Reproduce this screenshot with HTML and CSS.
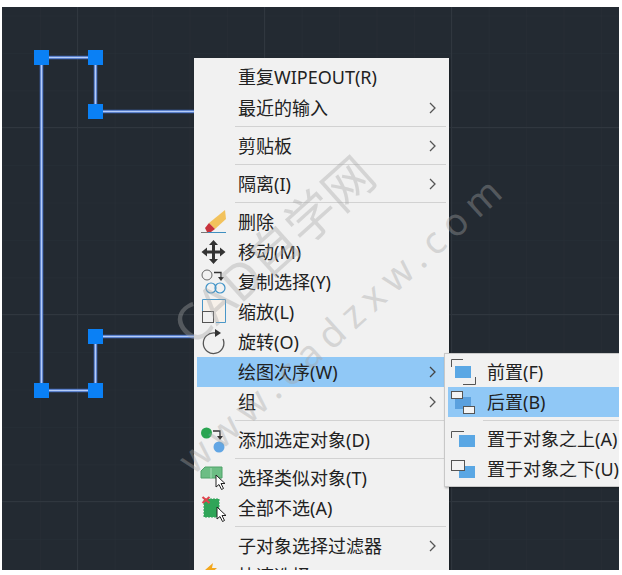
FILE: index.html
```html
<!DOCTYPE html>
<html lang="zh-CN">
<head>
<meta charset="utf-8">
<title>绘图次序</title>
<link rel="stylesheet" href="styles.css">
</head>
<body>
<div class="page">
  <div class="canvas">
    <svg class="drawing" width="617" height="563" viewBox="2 7 617 563" xmlns="http://www.w3.org/2000/svg">
      <defs>
        <pattern id="minor" x="2.5" y="15.5" width="37.4" height="37.4" patternUnits="userSpaceOnUse">
          <path d="M0 0V37.4M0 0H37.4" stroke="#282f37" stroke-width="1" fill="none"/>
        </pattern>
      </defs>
      <rect x="2" y="7" width="617" height="563" fill="#232a32"/>
      <rect x="2" y="7" width="617" height="563" fill="url(#minor)"/>
      <path d="M77.5 7V570M264.5 7V570M451.5 7V570M2 127.5H619M2 314.5H619M2 501.5H619" stroke="#30373f" fill="none"/>
      <path d="M194 111.5H95.5V57.5H41.5V390.5H95.5V336.5H194" stroke="#3f68bc" stroke-width="3.6" fill="none"/>
      <path d="M194 111.5H95.5V57.5H41.5V390.5H95.5V336.5H194" stroke="#b4ccf8" stroke-width="1.6" fill="none"/>
      <g fill="#0a80f5">
        <rect x="34" y="50" width="15" height="15"/>
        <rect x="88" y="50" width="15" height="15"/>
        <rect x="88" y="104" width="15" height="15"/>
        <rect x="88" y="329" width="15" height="15"/>
        <rect x="34" y="383" width="15" height="15"/>
        <rect x="88" y="383" width="15" height="15"/>
      </g>
    </svg>

    <div class="menu">
      <div class="row first"><span class="slot"></span><span class="label">重复WIPEOUT(R)</span></div>
      <div class="row"><span class="slot"></span><span class="label">最近的输入</span><svg class="chev" width="10" height="14" viewBox="0 0 10 14"><path d="M2 2l5 5-5 5" fill="none" stroke="#555" stroke-width="1.3"/></svg></div>
      <div class="sep"></div>
      <div class="row"><span class="slot"></span><span class="label">剪贴板</span><svg class="chev" width="10" height="14" viewBox="0 0 10 14"><path d="M2 2l5 5-5 5" fill="none" stroke="#555" stroke-width="1.3"/></svg></div>
      <div class="sep"></div>
      <div class="row"><span class="slot"></span><span class="label">隔离(I)</span><svg class="chev" width="10" height="14" viewBox="0 0 10 14"><path d="M2 2l5 5-5 5" fill="none" stroke="#555" stroke-width="1.3"/></svg></div>
      <div class="sep"></div>
      <div class="row"><span class="slot"><svg width="38" height="30" viewBox="0 0 38 30"><path d="M28 3L29 12 18 22 12 16Z" fill="#f2c25c"/><path d="M12 16L18 22 14 25H10L8 21Z" fill="#c8323c"/><path d="M4 25.500H11" stroke="#777"/><path d="M11 25.500H29" stroke="#3f8fc0"/></svg></span><span class="label">删除</span></div>
      <div class="row"><span class="slot"><svg width="38" height="30" viewBox="0 0 38 30"><path d="M16.500 3L21 8H18V13.500H23V10.500L28.500 15 23 19.500V16.500H18V22H21L16.500 27 12 22H15V16.500H10V19.500L4.500 15 10 10.500V13.500H15V8H12Z" fill="#333"/></svg></span><span class="label">移动(M)</span></div>
      <div class="row"><span class="slot"><svg width="38" height="30" viewBox="0 0 38 30"><circle cx="10" cy="8" r="5" fill="none" stroke="#666"/><path d="M17 5.500H24V10" fill="none" stroke="#333" stroke-width="1.300"/><path d="M21 10H27L24 14Z" fill="#333"/><circle cx="14" cy="21" r="5" fill="none" stroke="#3f93c8" stroke-width="1.200"/><circle cx="23" cy="21" r="5" fill="none" stroke="#3f93c8" stroke-width="1.200"/></svg></span><span class="label">复制选择(Y)</span></div>
      <div class="row"><span class="slot"><svg width="38" height="30" viewBox="0 0 38 30"><path d="M5.500 14V2.500H28.500V25.500H19" fill="#f7f1ea" stroke="#4a97c8"/><rect x="5.500" y="14.500" width="11" height="11" fill="#f1f1f1" stroke="#555"/></svg></span><span class="label">缩放(L)</span></div>
      <div class="row"><span class="slot"><svg width="38" height="30" viewBox="0 0 38 30"><path d="M18 6A10.300 10.300 0 1 0 26 12" fill="none" stroke="#555" stroke-width="1.300"/><path d="M18 2L24 6 18 10Z" fill="#333"/></svg></span><span class="label">旋转(O)</span></div>
      <div class="row active"><span class="slot"></span><span class="label">绘图次序(W)</span><svg class="chev" width="10" height="14" viewBox="0 0 10 14"><path d="M2 2l5 5-5 5" fill="none" stroke="#444" stroke-width="1.3"/></svg></div>
      <div class="row"><span class="slot"></span><span class="label">组</span><svg class="chev" width="10" height="14" viewBox="0 0 10 14"><path d="M2 2l5 5-5 5" fill="none" stroke="#555" stroke-width="1.3"/></svg></div>
      <div class="sep"></div>
      <div class="row"><span class="slot"><svg width="38" height="30" viewBox="0 0 38 30"><circle cx="9.500" cy="8" r="5.500" fill="#2aa552"/><path d="M16 6H23V11" fill="none" stroke="#333" stroke-width="1.300"/><path d="M20 11H26L23 15Z" fill="#333"/><circle cx="22" cy="22" r="5.500" fill="#62a6e4"/></svg></span><span class="label">添加选定对象(D)</span></div>
      <div class="sep"></div>
      <div class="row"><span class="slot"><svg width="38" height="30" viewBox="0 0 38 30"><path d="M4 8L8 4H25V15H4Z" fill="#6cbd84" stroke="#4fa268"/><path d="M14 5V15" stroke="#a5dcb5"/><path d="M19 12V24L22 21.500 24.500 26.500 26.500 25.500 24 20.500H28Z" fill="#fff" stroke="#222"/></svg></span><span class="label">选择类似对象(T)</span></div>
      <div class="row"><span class="slot"><svg width="38" height="30" viewBox="0 0 38 30"><rect x="7" y="6" width="15" height="18" fill="#2fa558" stroke="#2fa558" stroke-dasharray="2 1"/><path d="M5.500 4L12.500 10M12.500 4L5.500 10" stroke="#e0444e" stroke-width="2.200"/><path d="M20 14V26L23 23.500 25.500 28.500 27.500 27.500 25 22.500H29Z" fill="#fff" stroke="#222"/></svg></span><span class="label">全部不选(A)</span></div>
      <div class="sep"></div>
      <div class="row"><span class="slot"></span><span class="label">子对象选择过滤器</span><svg class="chev" width="10" height="14" viewBox="0 0 10 14"><path d="M2 2l5 5-5 5" fill="none" stroke="#555" stroke-width="1.3"/></svg></div>
      <div class="row"><span class="slot"><svg width="38" height="30" viewBox="0 0 38 30"><path d="M16 2L8 9H14L10 16 20 7H15Z" fill="#f2a71e"/></svg></span><span class="label">快速选择(Q)</span></div>
    </div>

    <div class="submenu">
      <div class="subrow"><span class="subslot"><svg width="30" height="30" viewBox="0 0 30 30"><path d="M3.500 10V2.500H15" fill="none" stroke="#555"/><rect x="7" y="9" width="16" height="12" fill="#5aa7e4"/><path d="M27.500 20V27.500H15" fill="none" stroke="#555"/></svg></span><span class="label">前置(F)</span></div>
      <div class="subrow active"><span class="subslot"><svg width="30" height="30" viewBox="0 0 30 30"><rect x="7" y="10" width="16" height="12" fill="#5aa0de"/><rect x="3.500" y="4.500" width="11" height="7" fill="#f4f4f4" stroke="#555"/><rect x="15.500" y="19.500" width="11" height="7" fill="#f4f4f4" stroke="#555"/></svg></span><span class="label">后置(B)</span></div>
      <div class="subsep"></div>
      <div class="subrow"><span class="subslot"><svg width="30" height="30" viewBox="0 0 30 30"><path d="M3.500 14V7.500H16" fill="none" stroke="#555"/><rect x="11" y="11" width="16" height="12" fill="#5aa7e4"/></svg></span><span class="label">置于对象之上(A)</span></div>
      <div class="subrow"><span class="subslot"><svg width="30" height="30" viewBox="0 0 30 30"><rect x="11" y="12" width="16" height="12" fill="#5aa7e4"/><rect x="3.500" y="6.500" width="13" height="10" fill="#f4f4f4" stroke="#555"/></svg></span><span class="label">置于对象之下(U)</span></div>
    </div>

    <div class="mark mark-name">CAD自学网</div>
    <div class="mark mark-url">www.cadzxw.com</div>
  </div>
</div>
</body>
</html>
```
FILE: styles.css
```css
html, body {
  margin: 0;
  padding: 0;
  background: #fff;
}

.page {
  width: 622px;
  height: 575px;
  box-sizing: border-box;
  padding: 7px 3px 5px 2px;
  display: flex;
  overflow: hidden;
  font-family: "Noto Sans", "Noto Sans CJK SC", sans-serif;
  color: #222;
}

.canvas {
  position: relative;
  flex: 1;
  overflow: hidden;
}

.drawing {
  display: block;
}

.menu {
  position: absolute;
  left: 192px;
  top: 51px;
  width: 255px;
  box-sizing: border-box;
  padding: 4px 3px 0;
  background: #f1f1f1;
  box-shadow: 1px 1px 2px rgba(0, 0, 0, 0.35);
}

.row {
  height: 30px;
  display: flex;
  align-items: center;
  font-size: 18px;
  line-height: 30px;
  white-space: nowrap;
}

.row.first {
  margin-bottom: 1px;
}

.row.active {
  background: #90c8f6;
}

.slot {
  width: 41px;
  height: 30px;
  flex: none;
  display: block;
}

.slot svg,
.subslot svg {
  display: block;
}

.label {
  flex: 1;
}

.chev {
  flex: none;
  margin-right: 8px;
}

.sep {
  height: 1px;
  margin: 3px 0 4px 38px;
  background: #d2d2d2;
}

.submenu {
  position: absolute;
  left: 442px;
  top: 346px;
  width: 200px;
  box-sizing: border-box;
  padding: 3px 0 2px 3px;
  background: #f1f1f1;
  border: 1px solid #c8c8c8;
  box-shadow: 1px 1px 2px rgba(0, 0, 0, 0.3);
}

.subrow {
  height: 30px;
  display: flex;
  align-items: center;
  font-size: 18px;
  line-height: 30px;
  white-space: nowrap;
}

.subrow.active {
  background: #90c8f6;
}

.subslot {
  width: 39px;
  height: 30px;
  flex: none;
}

.subsep {
  height: 1px;
  margin: 3px 0 3px 35px;
  background: #d2d2d2;
}

.mark {
  position: absolute;
  white-space: nowrap;
  color: rgba(165, 165, 165, 0.38);
  transform-origin: 0 100%;
  transform: rotate(-42deg);
  font-family: "Noto Sans", "Noto Sans CJK SC", sans-serif;
  pointer-events: none;
}

.mark-name {
  left: 195px;
  top: 295px;
  font-size: 50px;
  line-height: 50px;
  letter-spacing: 0;
}

.mark-url {
  left: 196px;
  top: 430px;
  font-size: 38px;
  line-height: 44px;
  letter-spacing: 8px;
}
```
